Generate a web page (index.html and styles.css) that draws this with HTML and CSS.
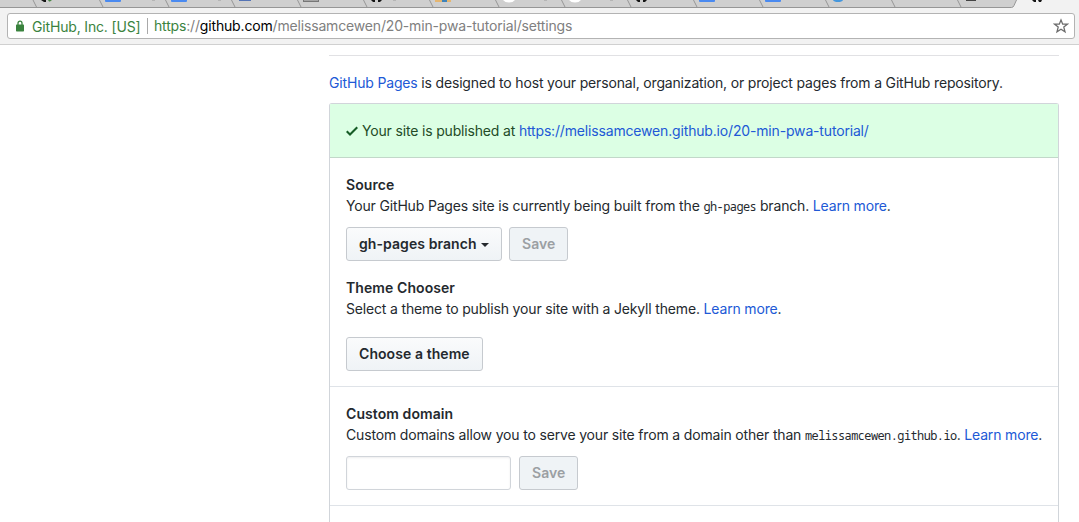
FILE: index.html
```html
<!DOCTYPE html>
<html lang="en">
<head>
<meta charset="utf-8">
<title>Settings</title>
<link rel="stylesheet" href="styles.css">
</head>
<body>
<header class="browser">
  <svg class="tabs" width="1079" height="8" viewBox="0 0 1079 8">
    <path d="M0 0H1016.5L1014 5.5Q1013.2 7.5 1011.5 7.5H0Z" fill="#cfcfcf"/>
    <path d="M0 7.5H1011.5Q1013.2 7.5 1014 5.5L1016.5 0" fill="none" stroke="#969696"/>
    <path d="M33 0l3.5 7M99.500 0l3.500 7M165.500 0l3.500 7M231.500 0l3.500 7M297.500 0l3.500 7M363.500 0l3.500 7M429.500 0l3.500 7M495.500 0l3.500 7M561.500 0l3.500 7M627.500 0l3.500 7M693.500 0l3.500 7M759.500 0l3.500 7M825.500 0l3.500 7M891.500 0l3.500 7M957.500 0l3.500 7" fill="none" stroke="#969696"/>
    <path d="M105 0h16v1q0 1-1 1h-14q-1 0-1-1zM171 0h16v1q0 1-1 1h-14q-1 0-1-1zM699 0h16v1q0 1-1 1h-14q-1 0-1-1zM765 0h16v1q0 1-1 1h-14q-1 0-1-1z" fill="#4a8af0"/>
    <path d="M239 0h12v1h-12z" fill="#5574b5"/>
    <path d="M303 0h16v2h-16z" fill="#777"/><path d="M304 0h14v1h-14z" fill="#a5a5a5"/>
    <path d="M435 0h16v2h-16z" fill="#e5b671"/><path d="M442 0h5v2h-5z" fill="#3f83ba"/>
    <path d="M503 0h12q-2 2.500-6 2.500t-6-2.500zM569 0h12q-2 2.500-6 2.500t-6-2.500z" fill="#fff"/>
    <path d="M833 0h10q-1 2-5 2t-5-2z" fill="#4597dd"/>
    <path d="M966 0h10v1h-10z" fill="#444"/>
    <path d="M371 0h4v2h-2zM378 0h4l-2 2h-2zM636 0h4v2h-2zM643 0h4l-2 2h-2zM1032 0h4v2h-2zM1038 0h4l-1 2h-2zM41 0h5v2h-2z" fill="#151515"/>
    <path d="M48 0h4l-2 1.500h-1z" fill="#488443"/>
    <path d="M152 0h3v1h-3zM218 0h3v1h-3zM393 0h3v1h-3zM544 0h3v1h-3zM610 0h3v1h-3z" fill="#b5b5b5"/>
  </svg>
  <div class="omnibox">
    <svg class="lock" width="8" height="12" viewBox="0 0 8 12"><path d="M2 5V3.200a2 2 0 0 1 4 0V5" fill="none" stroke="#3a833e" stroke-width="1.300"/><rect y="4.500" width="8" height="7" rx=".7" fill="#3a833e"/></svg>
    <span class="identity">GitHub, Inc. [US]</span>
    <span class="url"><span class="secure">https</span>://<span class="host">github.com</span>/melissamcewen/20-min-pwa-tutorial/settings</span>
    <svg class="star" width="16" height="16" viewBox="0 0 16 16"><path d="M8 2l1.700 4.200h4.600l-3.500 2.900 1.200 4.700L8 11.200l-4 2.600 1.200-4.700L1.700 6.200h4.600z" fill="none" stroke="#6c6c6c" stroke-width="1.300"/></svg>
  </div>
</header>
<main class="content">
  <p class="intro"><a>GitHub Pages</a> is designed to host your personal, organization, or project pages from a GitHub repository.</p>
  <div class="panel">
    <div class="published">
      <svg class="check" width="12" height="16" viewBox="0 0 12 16"><path d="M12 5l-8 8-4-4 1.500-1.500L4 10l6.500-6.500z" fill="#165c26"/></svg>
      <span>Your site is published at <a>https://melissamcewen.github.io/20-min-pwa-tutorial/</a></span>
    </div>
    <section class="section">
      <h2>Source</h2>
      <p>Your GitHub Pages site is currently being built from the <code>gh-pages</code> branch. <a>Learn more</a>.</p>
      <div class="row"><button class="btn branch">gh-pages branch<i class="caret"></i></button><button class="btn save" disabled>Save</button></div>
      <h2 class="theme-title">Theme Chooser</h2>
      <p>Select a theme to publish your site with a Jekyll theme. <a>Learn more</a>.</p>
      <div class="row theme-row"><button class="btn theme">Choose a theme</button></div>
    </section>
    <section class="section">
      <h2>Custom domain</h2>
      <p>Custom domains allow you to serve your site from a domain other than <code>melissamcewen.github.io</code>. <a>Learn more</a>.</p>
      <div class="row domain-row"><input class="field" type="text"><button class="btn save" disabled>Save</button></div>
    </section>
  </div>
</main>
</body>
</html>
```
FILE: styles.css
```css
* { box-sizing: border-box; }
body {
  margin: 0;
  height: 522px;
  overflow: hidden;
  background: #fff;
  color: #24292e;
  font: 14px/21px Inter, "Liberation Sans", sans-serif;
  letter-spacing: -.168px;
}
p, h2 { margin: 0; height: 21px; white-space: nowrap; }
a { color: #2159d6; }
.browser { height: 45px; background: #f2f2f2; border-bottom: 1px solid #d0d0d0; }
.tabs { display: block; }
.omnibox {
  display: flex;
  align-items: center;
  width: 1068px;
  height: 26px;
  margin: 5px 0 0 7px;
  padding: 0 5px 0 8px;
  background: #fff;
  border: 1px solid #b3b3b3;
  border-radius: 3px;
  white-space: nowrap;
}
.lock { margin-right: 8px; }
.identity { width: 115px; color: #3a833e; }
.url { padding-left: 6px; line-height: 16px; border-left: 1px solid #a9a9a9; color: #808080; }
.secure { color: #3a833e; }
.host { color: #000; }
.star { margin-left: auto; }
.content { width: 730px; margin: 10px 0 0 329px; border-top: 1px solid #e1e1e4; }
.intro { height: 47px; padding-top: 16px; }
.panel { height: 419px; border: 1px solid #d1d5da; border-bottom: 0; border-radius: 3px 3px 0 0; }
.published {
  display: flex;
  height: 54px;
  padding: 16px;
  background: #dcffe4;
  border-bottom: 1px solid #c2d8c9;
  color: #234b27;
  white-space: nowrap;
}
.check { margin: 3px 4px 0 0; }
.section { padding: 16px 16px 15px; border-bottom: 1px solid #dfe3e8; }
h2 { font-size: 14px; font-weight: 600; line-height: 21px; letter-spacing: .08px; }
code { font: 11.9px/1 "Noto Sans Mono", "DejaVu Sans Mono", monospace; letter-spacing: -.54px; }
.row { display: flex; gap: 7px; margin-top: 11px; }
.theme-title { margin-top: 16px; }
.theme-row { margin-top: 18px; }
.domain-row { gap: 8px; }
.btn {
  display: flex;
  align-items: center;
  height: 34px;
  padding: 0 12px;
  border: 1px solid #c6cacf;
  border-radius: 3px;
  background: linear-gradient(#fafbfc, #eff3f6);
  color: #24292e;
  font: 600 14px/20px Inter, "Liberation Sans", sans-serif;
  letter-spacing: .07px;
  white-space: nowrap;
}
.branch { width: 156px; }
.save { width: 59px; background: #eff3f6; color: #9b9fa3; }
.theme { width: 137px; }
.caret { margin: 1px 0 0 4px; border: 4px solid transparent; border-top-color: #24292e; border-bottom: 0; }
.field {
  width: 165px;
  height: 34px;
  border: 1px solid #d1d5da;
  border-radius: 3px;
  background: #fff;
  box-shadow: inset 0 1px 2px rgba(27, 31, 35, .075);
}
```
